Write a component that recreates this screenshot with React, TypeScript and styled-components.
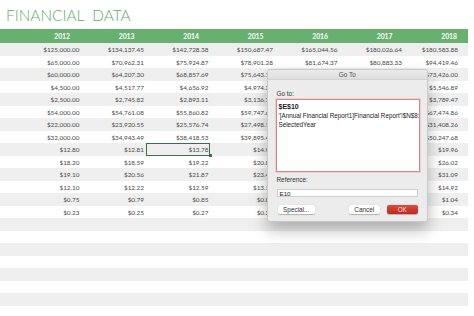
import styled, { createGlobalStyle, css } from 'styled-components'

const years = ['2012', '2013', '2014', '2015', '2016', '2017', '2018']

// 2016 and 2017 values from row 3 down sit under the Go To dialog
const rows: string[][] = [
  ['$125,000.00', '$134,137.45', '$142,728.38', '$150,687.47', '$165,044.56', '$180,026.64', '$180,583.88'],
  ['$65,000.00', '$70,962.31', '$75,924.87', '$78,901.28', '$81,674.37', '$80,883.33', '$94,419.46'],
  ['$60,000.00', '$64,207.30', '$68,857.69', '$75,643.18', '', '', '$73,426.00'],
  ['$4,500.00', '$4,517.77', '$4,656.92', '$4,974.31', '', '', '$5,546.89'],
  ['$2,500.00', '$2,745.82', '$2,893.11', '$3,136.72', '', '', '$3,789.47'],
  ['$54,000.00', '$54,761.08', '$55,860.82', '$59,747.63', '', '', '$67,474.86'],
  ['$22,000.00', '$23,920.55', '$25,576.74', '$27,498.12', '', '', '$31,408.26'],
  ['$32,000.00', '$34,943.49', '$38,418.53', '$39,895.40', '', '', '$50,247.68'],
  ['$12.80', '$12.81', '$13.78', '$14.92', '', '', '$19.96'],
  ['$18.20', '$18.59', '$19.22', '$20.81', '', '', '$26.02'],
  ['$19.10', '$20.56', '$21.87', '$23.40', '', '', '$31.09'],
  ['$12.10', '$12.22', '$12.59', '$13.11', '', '', '$14.92'],
  ['$0.75', '$0.79', '$0.85', '$0.89', '', '', '$1.04'],
  ['$0.23', '$0.25', '$0.27', '$0.28', '', '', '$0.34'],
]

const TOTAL_ROWS = 22

const GlobalStyle = createGlobalStyle`
  body {
    margin: 0;
    background: #ffffff;
    font-family: Lato, 'Liberation Sans', sans-serif;
  }
`

const GoToDialog = () => (
  <Dialog>
    <TitleBar>Go To</TitleBar>
    <DialogBody>
      <Label>Go to:</Label>
      <GoToList>
        <ListItem $strong>$E$10</ListItem>
        <ListItem>'[Annual Financial Report1]Financial Report'!$N$8:</ListItem>
        <ListItem>SelectedYear</ListItem>
      </GoToList>
      <Label $spaced>Reference:</Label>
      <RefInput>E10</RefInput>
      <ButtonRow>
        <Button>Special...</Button>
        <Spacer />
        <Button $wide>Cancel</Button>
        <Button $primary $wide>OK</Button>
      </ButtonRow>
    </DialogBody>
  </Dialog>
)

export const App = () => {
  return (
    <Page>
      <GlobalStyle />
      <Title>FINANCIAL&nbsp; DATA</Title>
      <HeaderRow>
        <span />
        {years.map((y) => (
          <HeaderCell key={y}>{y}</HeaderCell>
        ))}
      </HeaderRow>
      {Array.from({ length: TOTAL_ROWS }).map((_, i) => (
        <Row key={i} $shade={i % 2 === 0}>
          <span />
          {years.map((y, c) => (
            <Cell key={y} $selected={i === 8 && c === 2}>
              {rows[i] ? rows[i][c] : ''}
            </Cell>
          ))}
        </Row>
      ))}
      <GoToDialog />
    </Page>
  )
}

export default App

const Page = styled.div`
  position: relative;
  width: 474px;
  height: 316px;
  overflow: hidden;
  background: #ffffff;
`

const Title = styled.h1`
  margin: 0;
  height: 29px;
  padding: 5px 0 0 6px;
  box-sizing: border-box;
  font-family: Lato, 'Liberation Sans', sans-serif;
  font-weight: 300;
  font-size: 15.4px;
  line-height: 20px;
  letter-spacing: 0;
  color: #5ead68;
`

const gridCols = css`
  display: grid;
  grid-template-columns: 16.5px repeat(7, 64.5px);
  width: 468px;
`

const HeaderRow = styled.div`
  ${gridCols};
  height: 14px;
  align-items: center;
  background: #68b06f;
`

const HeaderCell = styled.div`
  text-align: right;
  padding-right: 11px;
  font-size: 6.8px;
  font-weight: 700;
  color: #ffffff;
`

const Row = styled.div<{ $shade: boolean }>`
  ${gridCols};
  height: 12.5px;
  align-items: stretch;
  background: ${(p) => (p.$shade ? '#efefef' : '#ffffff')};
`

const Cell = styled.div<{ $selected?: boolean }>`
  position: relative;
  display: flex;
  align-items: flex-end;
  justify-content: flex-end;
  padding: 0 1.5px 1.5px 0;
  font-size: 6.4px;
  line-height: 8px;
  color: #4a4a4a;
  white-space: nowrap;

  &:last-child {
    padding-right: 10px;
  }

  ${(p) =>
    p.$selected &&
    css`
      box-shadow: inset 0 0 0 1px #3c6e48;
      &::after {
        content: '';
        position: absolute;
        right: -1.5px;
        bottom: -1.5px;
        width: 3px;
        height: 3px;
        background: #3c6e48;
      }
    `}
`

const Dialog = styled.div`
  position: absolute;
  left: 266.5px;
  top: 69px;
  width: 161.5px;
  height: 153px;
  box-sizing: border-box;
  background: #ececec;
  border: 1px solid #c9c9c9;
  border-radius: 3px;
  box-shadow: 0 8px 16px rgba(0, 0, 0, 0.28);
  font-family: 'Liberation Sans', Arial, sans-serif;
  color: #333333;
  display: flex;
  flex-direction: column;
`

const TitleBar = styled.div`
  height: 9px;
  line-height: 9px;
  text-align: center;
  font-size: 6.4px;
  color: #4a4a4a;
  background: linear-gradient(#ebebeb, #dedede);
  border-bottom: 1px solid #d2d2d2;
  border-radius: 3px 3px 0 0;
`

const DialogBody = styled.div`
  display: flex;
  flex-direction: column;
  padding: 10px 7.5px 0 8px;
`

const Label = styled.div<{ $spaced?: boolean }>`
  font-size: 6.4px;
  line-height: 8px;
  padding-left: 1px;
  margin-top: ${(p) => (p.$spaced ? '4px' : '0')};
  margin-bottom: ${(p) => (p.$spaced ? '4.5px' : '1px')};
`

const GoToList = styled.div`
  height: 73px;
  box-sizing: border-box;
  background: #ffffff;
  border: 1px solid #d7868a;
  box-shadow: 0 0 0 0.5px #e9b4b6;
  padding: 1.5px 2px;
  overflow: hidden;
`

const ListItem = styled.div<{ $strong?: boolean }>`
  font-size: ${(p) => (p.$strong ? '7px' : '6.3px')};
  font-weight: ${(p) => (p.$strong ? 700 : 400)};
  line-height: 9px;
  color: #222222;
  white-space: nowrap;
`

const RefInput = styled.div`
  margin: 0 1.5px 0 1px;
  height: 8.5px;
  box-sizing: border-box;
  background: #ffffff;
  border: 0.5px solid #cfcfcf;
  padding-left: 2px;
  font-size: 6.2px;
  line-height: 8px;
  color: #222222;
`

const ButtonRow = styled.div`
  display: flex;
  align-items: center;
  gap: 6.5px;
  margin-top: 7.5px;
  padding: 0 1.5px 0 2px;
`

const Spacer = styled.div`
  flex: 1;
`

const Button = styled.div<{ $primary?: boolean; $wide?: boolean }>`
  height: 9px;
  width: ${(p) => (p.$wide ? '31.5px' : '37.5px')};
  box-sizing: border-box;
  border-radius: 2px;
  text-align: center;
  font-size: 6.4px;
  line-height: 9px;
  color: ${(p) => (p.$primary ? '#ffd9d5' : '#333333')};
  background: ${(p) =>
    p.$primary ? 'linear-gradient(#dc4d3f, #b92a1f)' : '#ffffff'};
  box-shadow: 0 0.5px 1px rgba(0, 0, 0, 0.25);
`
